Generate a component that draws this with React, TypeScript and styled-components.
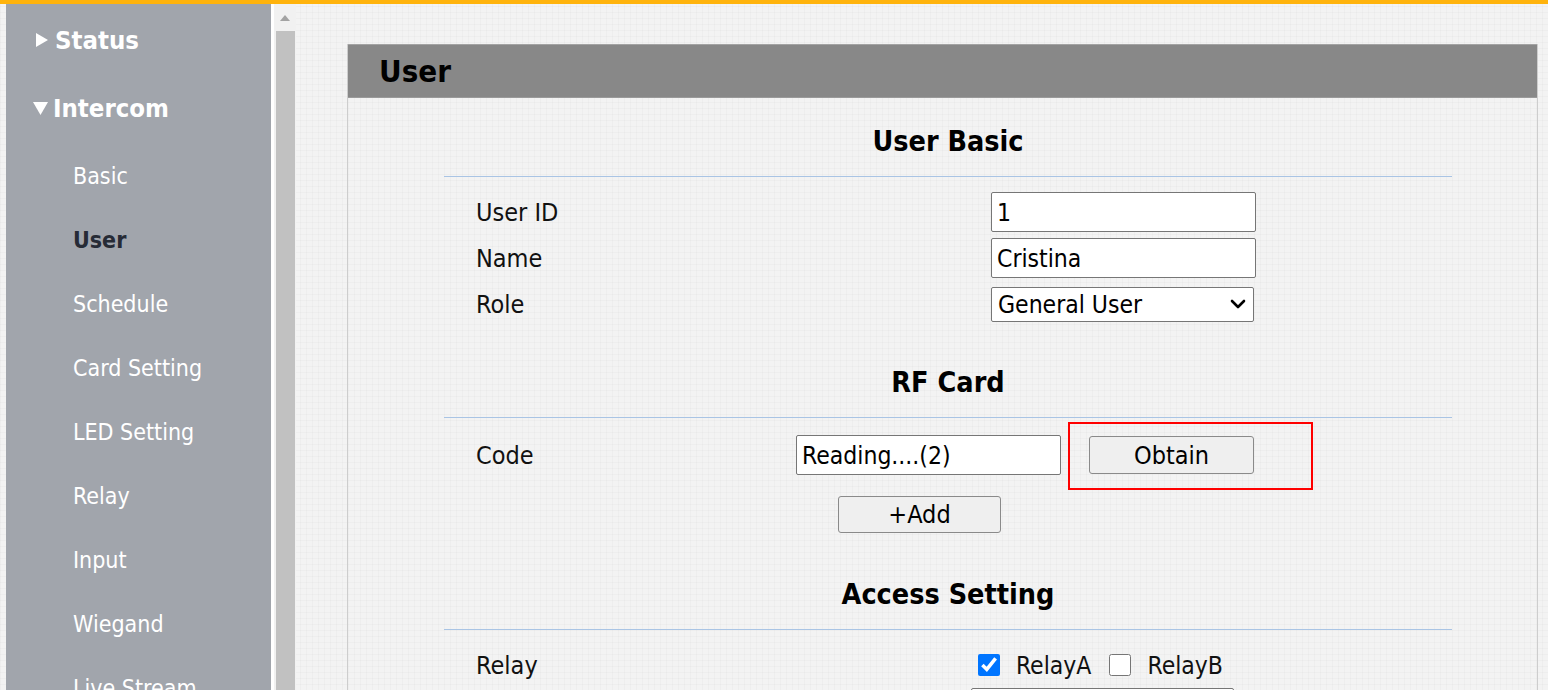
import React from 'react';
import styled, { createGlobalStyle } from 'styled-components';

const GlobalStyle = createGlobalStyle`
  html, body {
    margin: 0;
    padding: 0;
    height: 100%;
    overflow: hidden;
  }
  body {
    font-family: "DejaVu Sans Condensed", "DejaVu Sans", sans-serif;
    background: #f3f3f3;
  }
`;

const gridBackground = `
  background-color: #f3f3f3;
  background-image:
    linear-gradient(rgba(0, 0, 0, 0.018) 1px, transparent 1px),
    linear-gradient(90deg, rgba(0, 0, 0, 0.018) 1px, transparent 1px);
  background-size: 6px 6px;
`;

const Page = styled.div`
  display: flex;
  flex-direction: column;
  height: 690px;
  overflow: hidden;
  ${gridBackground}
`;

const TopBar = styled.div`
  height: 4px;
  flex: none;
  background: #ffb30c;
`;

const Body = styled.div`
  display: flex;
  flex: 1;
  min-height: 0;
`;

const Sidebar = styled.nav`
  width: 265px;
  margin-left: 6px;
  flex: none;
  background: #a1a5ac;
  padding-top: 2px;
  box-sizing: border-box;
`;

const TopItem = styled.div<{ open?: boolean }>`
  height: 68px;
  display: flex;
  align-items: center;
  padding-left: ${(p) => (p.open ? '27px' : '30px')};
  gap: ${(p) => (p.open ? '5px' : '7px')};
  color: #ffffff;
  font-size: 25.5px;
  font-weight: bold;
`;

const SubItem = styled.div<{ active?: boolean }>`
  height: 64px;
  display: flex;
  align-items: center;
  padding-left: 67px;
  font-size: 23px;
  color: ${(p) => (p.active ? '#262b36' : '#ffffff')};
  font-weight: ${(p) => (p.active ? 'bold' : 'normal')};
  white-space: nowrap;
`;

const SubList = styled.div`
  margin-top: 2px;
`;

const ScrollTrack = styled.div`
  width: 22px;
  flex: none;
  border-left: 3px solid #ffffff;
  background: #f1f1f1;
  display: flex;
  flex-direction: column;
  align-items: center;
`;

const ScrollArrow = styled.div`
  height: 27px;
  display: flex;
  align-items: center;
  justify-content: center;
`;

const ScrollThumb = styled.div`
  width: 19px;
  flex: 1;
  background: #c1c1c1;
`;

const Main = styled.main`
  flex: 1;
  min-width: 0;
  padding: 40px 10px 0 51px;
`;

const Panel = styled.section`
  border-left: 1px solid #cdcdcd;
  border-right: 1px solid #cdcdcd;
  height: 100%;
`;

const PanelHeader = styled.header`
  height: 54px;
  box-sizing: border-box;
  background: #888888;
  border-top: 1px solid #a3a3a3;
  border-bottom: 1px solid #9a9a9a;
  display: flex;
  align-items: center;
  padding-left: 31px;
`;

const PanelTitle = styled.h1`
  margin: 0;
  font-size: 31px;
  font-weight: bold;
  color: #000000;
`;

const Form = styled.div`
  width: 1008px;
  margin-left: 96px;
  padding-top: 27px;
`;

const Section = styled.div`
  & + & {
    margin-top: 39px;
  }
`;

const SectionTitle = styled.h2`
  margin: 0;
  text-align: center;
  font-size: 28.5px;
  font-weight: bold;
  line-height: 34px;
  padding-bottom: 17px;
  border-bottom: 1px solid #a9c4e4;
  color: #000000;
`;

const Rows = styled.div`
  padding-top: 12px;
`;

const Row = styled.div<{ tall?: boolean }>`
  display: grid;
  grid-template-columns: 1fr auto;
  align-items: center;
  height: ${(p) => (p.tall ? '50px' : '46px')};
  padding-left: 32px;
  padding-right: 196px;
`;

const Label = styled.span`
  font-size: 25px;
  color: #111111;
`;

const Value = styled.div<{ inset?: number; top?: boolean }>`
  display: flex;
  align-items: center;
  align-self: ${(p) => (p.top ? 'start' : 'center')};
  margin-right: ${(p) => p.inset ?? 0}px;
`;

const TextInput = styled.input`
  width: 265px;
  height: 40px;
  box-sizing: border-box;
  border: 1px solid #767676;
  border-radius: 2px;
  background: #ffffff;
  padding: 0 5px;
  font-family: inherit;
  font-size: 24.5px;
  color: #000000;
`;

const SelectWrap = styled.span`
  position: relative;
  display: inline-flex;
`;

const Select = styled.select`
  appearance: none;
  width: 263px;
  height: 35px;
  box-sizing: border-box;
  border: 1px solid #767676;
  border-radius: 2px;
  background: #ffffff;
  padding: 0 6px;
  font-family: inherit;
  font-size: 24.5px;
  color: #000000;
`;

const Chevron = styled.svg`
  position: absolute;
  right: 8px;
  top: 50%;
  transform: translateY(-50%);
  pointer-events: none;
`;

const Button = styled.button<{ w: number; h: number }>`
  width: ${(p) => p.w}px;
  height: ${(p) => p.h}px;
  box-sizing: border-box;
  border: 1px solid #8a8a8a;
  border-radius: 3px;
  background: #efefef;
  font-family: inherit;
  font-size: 25px;
  color: #000000;
  padding: 0;
`;

const Highlight = styled.span`
  position: relative;
  display: inline-flex;
  margin-left: 28px;
`;

const HighlightBox = styled.span`
  position: absolute;
  left: -21px;
  top: -14px;
  right: -59px;
  bottom: -16px;
  border: 2px solid #ff0000;
  pointer-events: none;
`;

const AddRow = styled.div`
  display: flex;
  justify-content: flex-end;
  padding: 16px 451px 6px 0;
`;

const Check = styled.input`
  width: 22px;
  height: 22px;
  margin: 0;
  accent-color: #0075ff;
`;

const CheckLabel = styled.span<{ last?: boolean }>`
  font-size: 24.5px;
  color: #111111;
  margin-left: 16px;
  margin-right: ${(p) => (p.last ? 0 : 18)}px;
`;

const RightTriangle = () => (
  <svg width="12" height="14" viewBox="0 0 12 14">
    <polygon points="0,0 12,7 0,14" fill="#ffffff" />
  </svg>
);

const DownTriangle = () => (
  <svg width="15" height="13" viewBox="0 0 15 13">
    <polygon points="0,0 15,0 7.5,13" fill="#ffffff" />
  </svg>
);

const ChevronDown = () => (
  <Chevron width="16" height="10" viewBox="0 0 16 10">
    <polyline
      points="2,2 8,8 14,2"
      fill="none"
      stroke="#000000"
      strokeWidth="2.6"
      strokeLinecap="round"
      strokeLinejoin="round"
    />
  </Chevron>
);

const subItems = [
  'Basic',
  'User',
  'Schedule',
  'Card Setting',
  'LED Setting',
  'Relay',
  'Input',
  'Wiegand',
  'Live Stream',
];

export default function App() {
  return (
    <Page>
      <GlobalStyle />
      <TopBar />
      <Body>
        <Sidebar>
          <TopItem>
            <RightTriangle />
            Status
          </TopItem>
          <TopItem open>
            <DownTriangle />
            Intercom
          </TopItem>
          <SubList>
            {subItems.map((item) => (
              <SubItem key={item} active={item === 'User'}>
                {item}
              </SubItem>
            ))}
          </SubList>
        </Sidebar>
        <ScrollTrack>
          <ScrollArrow>
            <svg width="10" height="6" viewBox="0 0 10 6">
              <polygon points="0,6 5,0 10,6" fill="#a3a3a3" />
            </svg>
          </ScrollArrow>
          <ScrollThumb />
        </ScrollTrack>
        <Main>
          <Panel>
            <PanelHeader>
              <PanelTitle>User</PanelTitle>
            </PanelHeader>
            <Form>
              <Section>
                <SectionTitle>User Basic</SectionTitle>
                <Rows>
                  <Row>
                    <Label>User ID</Label>
                    <Value>
                      <TextInput defaultValue="1" />
                    </Value>
                  </Row>
                  <Row>
                    <Label>Name</Label>
                    <Value>
                      <TextInput defaultValue="Cristina" />
                    </Value>
                  </Row>
                  <Row>
                    <Label>Role</Label>
                    <Value inset={2}>
                      <SelectWrap>
                        <Select defaultValue="General User">
                          <option>General User</option>
                          <option>Admin</option>
                        </Select>
                        <ChevronDown />
                      </SelectWrap>
                    </Value>
                  </Row>
                </Rows>
              </Section>
              <Section>
                <SectionTitle>RF Card</SectionTitle>
                <Rows>
                  <Row tall>
                    <Label>Code</Label>
                    <Value inset={2}>
                      <TextInput defaultValue="Reading....(2)" />
                      <Highlight>
                        <Button w={165} h={38}>
                          Obtain
                        </Button>
                        <HighlightBox />
                      </Highlight>
                    </Value>
                  </Row>
                </Rows>
                <AddRow>
                  <Button w={163} h={37}>
                    +Add
                  </Button>
                </AddRow>
              </Section>
              <Section>
                <SectionTitle>Access Setting</SectionTitle>
                <Rows>
                  <Row>
                    <Label>Relay</Label>
                    <Value inset={33}>
                      <Check type="checkbox" defaultChecked />
                      <CheckLabel>RelayA</CheckLabel>
                      <Check type="checkbox" />
                      <CheckLabel last>RelayB</CheckLabel>
                    </Value>
                  </Row>
                  <Row>
                    <Label />
                    <Value inset={22} top>
                      <SelectWrap>
                        <Select defaultValue="Always">
                          <option>Always</option>
                        </Select>
                        <ChevronDown />
                      </SelectWrap>
                    </Value>
                  </Row>
                </Rows>
              </Section>
            </Form>
          </Panel>
        </Main>
      </Body>
    </Page>
  );
}
